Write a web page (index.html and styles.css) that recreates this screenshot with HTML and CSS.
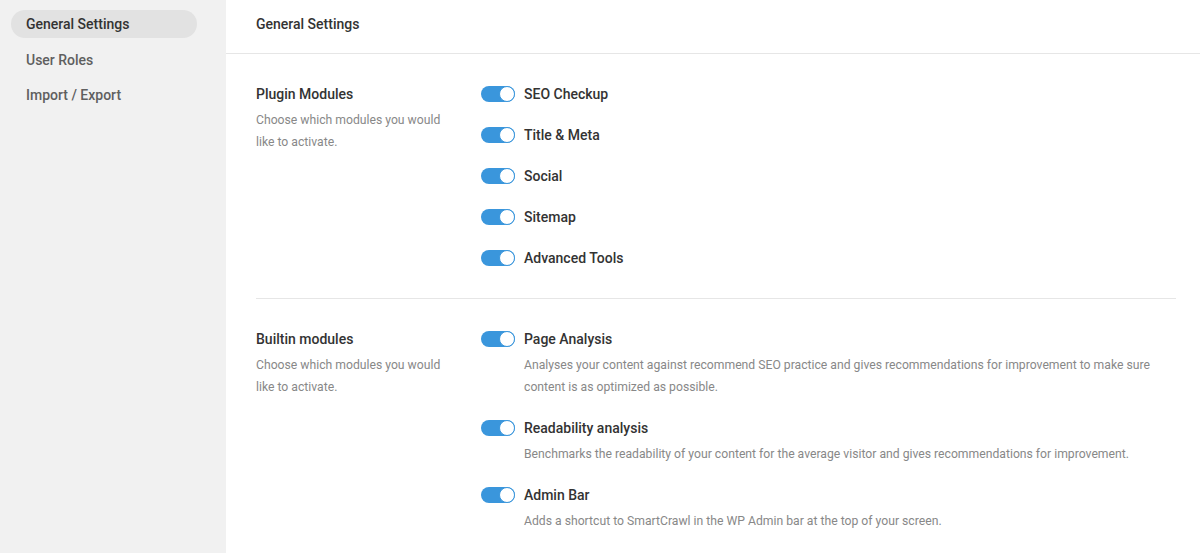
FILE: index.html
```html
<!DOCTYPE html>
<html lang="en">
<head>
<meta charset="utf-8">
<title>General Settings</title>
<link rel="stylesheet" href="styles.css">
</head>
<body>
<div class="app">
  <nav class="sidebar">
    <a class="nav-item active">General Settings</a>
    <a class="nav-item">User Roles</a>
    <a class="nav-item">Import / Export</a>
  </nav>
  <main class="main">
    <header class="main-header">General Settings</header>
    <div class="content">
      <section class="row">
        <div class="row-label">
          <h3 class="label-title">Plugin Modules</h3>
          <p class="label-desc">Choose which modules you would like to activate.</p>
        </div>
        <div class="row-options">
          <div class="opt"><span class="toggle"></span><div class="opt-body"><div class="opt-title">SEO Checkup</div></div></div>
          <div class="opt"><span class="toggle"></span><div class="opt-body"><div class="opt-title">Title &amp; Meta</div></div></div>
          <div class="opt"><span class="toggle"></span><div class="opt-body"><div class="opt-title">Social</div></div></div>
          <div class="opt"><span class="toggle"></span><div class="opt-body"><div class="opt-title">Sitemap</div></div></div>
          <div class="opt"><span class="toggle"></span><div class="opt-body"><div class="opt-title">Advanced Tools</div></div></div>
        </div>
      </section>
      <section class="row">
        <div class="row-label">
          <h3 class="label-title">Builtin modules</h3>
          <p class="label-desc">Choose which modules you would like to activate.</p>
        </div>
        <div class="row-options">
          <div class="opt"><span class="toggle"></span><div class="opt-body"><div class="opt-title">Page Analysis</div><p class="opt-desc">Analyses your content against recommend SEO practice and gives recommendations for improvement to make sure content is as optimized as possible.</p></div></div>
          <div class="opt"><span class="toggle"></span><div class="opt-body"><div class="opt-title">Readability analysis</div><p class="opt-desc">Benchmarks the readability of your content for the average visitor and gives recommendations for improvement.</p></div></div>
          <div class="opt"><span class="toggle"></span><div class="opt-body"><div class="opt-title">Admin Bar</div><p class="opt-desc">Adds a shortcut to SmartCrawl in the WP Admin bar at the top of your screen.</p></div></div>
        </div>
      </section>
    </div>
  </main>
</div>
</body>
</html>
```
FILE: styles.css
```css
* { box-sizing: border-box; }
html, body { margin: 0; padding: 0; height: 100%; }
body {
  font-family: Roboto, "Liberation Sans", Arial, sans-serif;
  color: #333;
  background: #fff;
  overflow: hidden;
}
.app {
  display: flex;
  height: 553px;
}
.sidebar {
  width: 226px;
  flex: none;
  background: #f1f1f1;
  padding: 10px 29px 0 11px;
  display: flex;
  flex-direction: column;
  gap: 7.5px;
}
.nav-item {
  display: block;
  height: 28px;
  line-height: 28px;
  padding: 0 15px;
  border-radius: 14px;
  font-size: 14px;
  font-weight: 500;
  color: #5f5f5f;
}
.nav-item.active {
  background: #e2e2e2;
  color: #333;
}
.main {
  flex: 1;
  background: #fff;
}
.main-header {
  height: 54px;
  padding: 0 30px;
  border-bottom: 1px solid #e6e6e6;
  font-size: 14px;
  font-weight: 500;
  line-height: 48px;
  color: #333;
}
.content {
  padding: 0 24px 0 30px;
}
.row {
  display: grid;
  grid-template-columns: 225px 1fr;
  padding: 29px 0 29px;
  border-bottom: 1px solid #e6e6e6;
}
.row:last-child { border-bottom: none; }
.label-title {
  margin: 0;
  font-size: 14px;
  font-weight: 500;
  line-height: 22px;
  color: #333;
}
.label-desc {
  margin: 4px 0 0;
  font-size: 12.2px;
  line-height: 22px;
  color: #888;
  width: 200px;
}
.row-options {
  display: flex;
  flex-direction: column;
  gap: 19px;
}
.opt {
  display: flex;
  gap: 9px;
  align-items: flex-start;
}
.toggle {
  flex: none;
  position: relative;
  width: 34px;
  height: 16px;
  margin-top: 3px;
  border-radius: 8px;
  background: #3a96dc;
}
.toggle::after {
  content: "";
  position: absolute;
  right: 0;
  top: 0;
  width: 16px;
  height: 16px;
  border-radius: 50%;
  background: #fff;
  border: 1.5px solid #3a96dc;
  box-sizing: border-box;
}
.opt-title {
  font-size: 14px;
  font-weight: 500;
  line-height: 22px;
  color: #333;
}
.opt-desc {
  margin: 4px 0 0;
  font-size: 12.2px;
  line-height: 22px;
  color: #888;
}
```
